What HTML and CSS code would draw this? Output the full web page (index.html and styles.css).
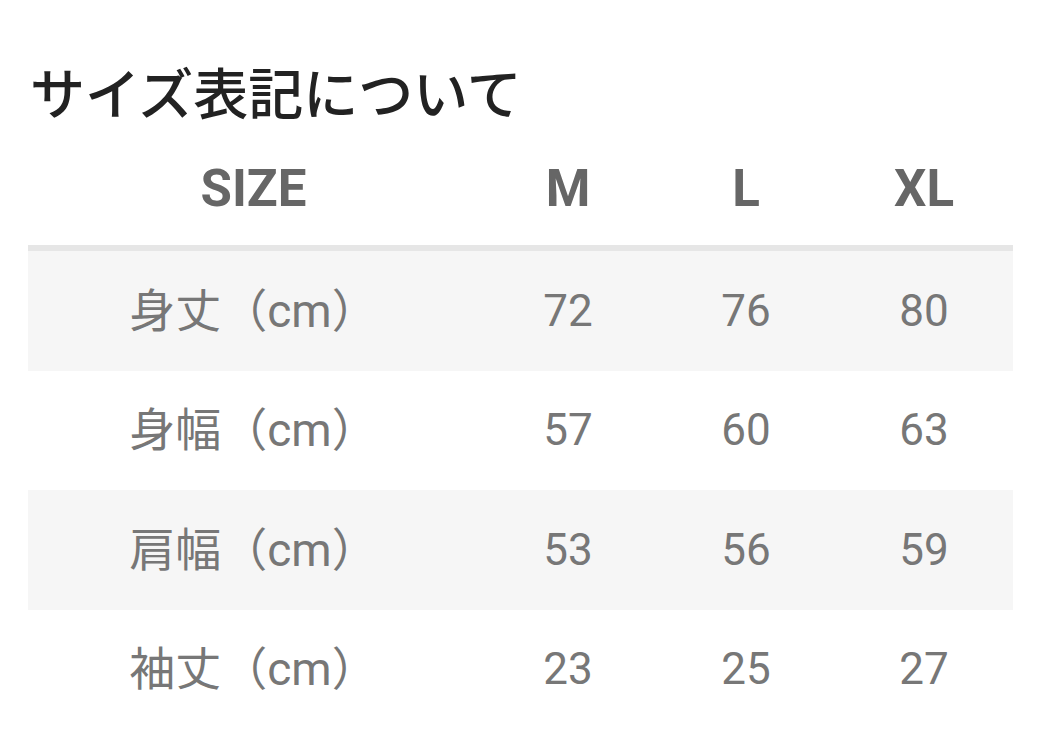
FILE: index.html
```html
<!DOCTYPE html>
<html lang="ja">
<head>
<meta charset="utf-8">
<link rel="stylesheet" href="styles.css">
</head>
<body>
<div class="page">
  <h1 class="title">サイズ表記について</h1>
  <table class="size-table">
    <thead>
      <tr><th class="col-label">SIZE</th><th>M</th><th>L</th><th>XL</th></tr>
    </thead>
    <tbody>
      <tr><td class="col-label">身丈（cm）</td><td>72</td><td>76</td><td>80</td></tr>
      <tr><td class="col-label">身幅（cm）</td><td>57</td><td>60</td><td>63</td></tr>
      <tr><td class="col-label">肩幅（cm）</td><td>53</td><td>56</td><td>59</td></tr>
      <tr><td class="col-label">袖丈（cm）</td><td>23</td><td>25</td><td>27</td></tr>
    </tbody>
  </table>
</div>
</body>
</html>
```
FILE: styles.css
```css
html, body {
  margin: 0;
  padding: 0;
  background: #fff;
}
.page {
  padding: 54px 24px 0 28px;
  font-family: Roboto, "Noto Sans CJK JP", sans-serif;
}
.title {
  margin: 0 0 0 2px;
  font-family: "Noto Sans CJK JP", sans-serif;
  font-weight: 500;
  font-size: 55px;
  line-height: 72px;
  color: #222;
}
.size-table {
  width: 985px;
  border-collapse: collapse;
  table-layout: fixed;
}
.size-table th, .size-table td {
  text-align: center;
  padding: 0;
  width: 178px;
}
.size-table .col-label {
  width: 451px;
}
.size-table th {
  font-weight: 700;
  font-size: 51px;
  color: #666;
  height: 122px;
  box-sizing: border-box;
  padding-top: 6px;
  border-bottom: 6px solid #e6e6e6;
}
.size-table td {
  font-size: 44px;
  color: #777;
  height: 119.5px;
}
.size-table td.col-label {
  font-size: 46px;
  line-height: 1;
}
.size-table tbody tr:nth-child(odd) {
  background: #f6f6f6;
}
```
